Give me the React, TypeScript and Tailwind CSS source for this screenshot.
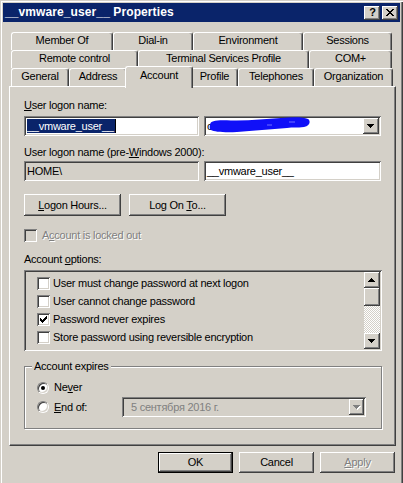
import React from "react";

// classic 3D edges
const RAISED = "shadow-[inset_-1px_-1px_#404040,inset_1px_1px_#ffffff,inset_-2px_-2px_#808080]";
const SUNKEN = "shadow-[inset_1px_1px_#808080,inset_-1px_-1px_#ffffff,inset_2px_2px_#404040,inset_-2px_-2px_#d4d0c8]";
const EMBOSS = "text-[#808080] [text-shadow:1px_1px_0_#ffffff]";

const ROW1 = [
  { label: "Member Of", w: "w-[102px]" },
  { label: "Dial-in", w: "w-[80px]" },
  { label: "Environment", w: "w-[110px]" },
  { label: "Sessions", w: "w-[89px]" },
];
const ROW2 = [
  { label: "Remote control", w: "w-[127px]" },
  { label: "Terminal Services Profile", w: "w-[171px]" },
  { label: "COM+", w: "w-[83px]" },
];
const ROW3 = [
  { label: "General", w: "w-[58px]" },
  { label: "Address", w: "w-[58px]" },
  { label: "Account", w: "w-[68px]", active: true },
  { label: "Profile", w: "w-[47px]" },
  { label: "Telephones", w: "w-[76px]" },
  { label: "Organization", w: "w-[79px]" },
];

const OPTIONS = [
  { label: "User must change password at next logon", checked: false },
  { label: "User cannot change password", checked: false },
  { label: "Password never expires", checked: true },
  { label: "Store password using reversible encryption", checked: false },
];

function Arrow({ up = false, disabled = false }: { up?: boolean; disabled?: boolean }) {
  const rows = up ? [3, 2, 1, 0] : [0, 1, 2, 3];
  const tri = (fill: string, dx: number) =>
    rows.map((inset, i) => <rect key={fill + i} x={inset + dx} y={i + dx} width={7 - inset * 2} height={1} fill={fill} />);
  return (
    <svg width="8" height="5" viewBox="0 0 8 5" shapeRendering="crispEdges">
      {disabled && tri("#ffffff", 1)}
      {tri(disabled ? "#808080" : "#000000", 0)}
    </svg>
  );
}

function CheckBox({ checked = false, disabled = false }: { checked?: boolean; disabled?: boolean }) {
  return (
    <span className={`w-[13px] h-[13px] shrink-0 flex items-center justify-center ${disabled ? "bg-[#d4d0c8]" : "bg-white"} ${SUNKEN}`}>
      {checked && (
        <svg width="7" height="7" viewBox="0 0 7 7" shapeRendering="crispEdges">
          <rect x="6" y="0" width="1" height="3" />
          <rect x="5" y="1" width="1" height="3" />
          <rect x="4" y="2" width="1" height="3" />
          <rect x="3" y="3" width="1" height="3" />
          <rect x="2" y="4" width="1" height="3" />
          <rect x="1" y="3" width="1" height="3" />
          <rect x="0" y="2" width="1" height="3" />
        </svg>
      )}
    </span>
  );
}

function Radio({ checked = false }: { checked?: boolean }) {
  return (
    <span className="w-[12px] h-[12px] shrink-0 rounded-full border border-t-[#808080] border-l-[#808080] border-b-white border-r-white">
      <span className="w-full h-full rounded-full bg-white flex items-center justify-center shadow-[inset_1px_1px_#404040,inset_-1px_-1px_#d4d0c8]">
        {checked && <span className="w-[4px] h-[4px] rounded-full bg-black" />}
      </span>
    </span>
  );
}

function Tab({ label, w, active }: { label: string; w: string; active?: boolean }) {
  return (
    <div
      className={`${w} flex justify-center pt-[1px] bg-[#d4d0c8] border-l border-t border-white border-r border-r-[#404040] rounded-t-[3px] shadow-[inset_-1px_0_#808080] ${
        active ? "relative z-10 h-[22px] -mx-[2px] -mb-[2px] pt-[2px]" : "h-[18px]"
      }`}
    >
      {label}
    </div>
  );
}

function PushButton({ children, w = "w-[75px]", h = "h-[21px]", isDefault = false }: { children: React.ReactNode; w?: string; h?: string; isDefault?: boolean }) {
  return (
    <div className={`${w} ${h} ${isDefault ? "border border-black" : ""} flex`}>
      <div className={`flex-1 flex items-center justify-center ${RAISED}`}>{children}</div>
    </div>
  );
}

export default function App() {
  return (
    <div className="w-[403px] h-[483px] overflow-hidden bg-[#d4d0c8] font-['Liberation_Sans',Arial,sans-serif] text-[11px] leading-[13px] tracking-[-0.25px] text-black select-none">
      <div className="w-[403px] h-[520px] pt-[3px] px-[3px] shadow-[inset_1px_1px_#d4d0c8,inset_2px_2px_#ffffff,inset_-1px_-1px_#404040,inset_-2px_-2px_#808080]">
        {/* caption */}
        <div className="h-[19px] bg-[#0a246a] flex items-center justify-between pl-[2px] pr-[2px]">
          <span className="text-white font-bold text-[12px] tracking-[0.1px]">__vmware_user__ Properties</span>
          <div className="flex gap-[2px] text-black">
            <div className={`w-[16px] h-[14px] bg-[#d4d0c8] flex items-center justify-center font-bold text-[11px] leading-none pl-[1px] ${RAISED}`}>?</div>
            <div className={`w-[16px] h-[14px] bg-[#d4d0c8] flex items-center justify-center ${RAISED}`}>
              <svg width="8" height="7" viewBox="0 0 8 7" shapeRendering="crispEdges">
                {[0, 1, 2, 3, 4, 5, 6].map((i) => (
                  <g key={i}>
                    <rect x={i} y={i} width="2" height="1" />
                    <rect x={6 - i} y={i} width="2" height="1" />
                  </g>
                ))}
              </svg>
            </div>
          </div>
        </div>

        <div className="pl-[6px] pr-[4px] pt-[10px]">
          {/* tab strip */}
          <div className="ml-[2px] w-[382px]">
            <div className="flex h-[18px]">
              {ROW1.map((t) => <Tab key={t.label} {...t} />)}
            </div>
            <div className="flex h-[18px]">
              {ROW2.map((t) => <Tab key={t.label} {...t} />)}
            </div>
            <div className="flex items-end h-[18px]">
              {ROW3.map((t) => <Tab key={t.label} {...t} />)}
            </div>
          </div>

          {/* Account page */}
          <div className="h-[360px] border-t border-l border-white border-r border-b border-r-[#404040] border-b-[#404040] shadow-[inset_-1px_-1px_#808080] pl-[14px] pr-[13px]">
            <div className="mt-[12px]">
              <u>U</u>ser logon name:
            </div>
            <div className="mt-[4px] flex gap-[5px]">
              <div className={`w-[175px] h-[20px] bg-white flex items-center pl-[3px] ${SUNKEN}`}>
                <span className="bg-[#0a246a] text-white h-[14px] flex items-center pr-[1px]">__vmware_user__</span>
                <span className="w-[1px] h-[14px] bg-black" />
              </div>
              <div className={`relative w-[177px] h-[20px] bg-white flex items-center justify-between pl-[3px] pr-[2px] ${SUNKEN}`}>
                <span>c</span>
                <svg className="absolute left-[5px] top-[1px]" width="102" height="16" viewBox="0 0 102 16">
                  <path
                    d="M1 8 C1 3 10 3 22 3.5 C40 4 56 2 72 1 C82 0 94 -0.5 99 2 C102 4 101 9 95 10 C88 11 84 10 78 11 C62 12 44 14 28 15 C16 15.5 5 15 2 13 C0.5 12 0.5 10 1 8 Z"
                    fill="#1010f8"
                  />
                  <path d="M58 8 L63 8 M80 5 L86 5" stroke="#7070ff" strokeWidth="1" />
                </svg>
                <div className={`w-[16px] h-[16px] flex items-center justify-center bg-[#d4d0c8] ${RAISED}`}>
                  <Arrow />
                </div>
              </div>
            </div>

            <div className="mt-[10px]">
              User logon name (pre-<u>W</u>indows 2000):
            </div>
            <div className="mt-[2px] flex gap-[5px]">
              <div className={`w-[175px] h-[20px] bg-[#d4d0c8] flex items-center pl-[3px] ${SUNKEN}`}>HOME\</div>
              <div className={`w-[177px] h-[20px] bg-white flex items-center pl-[3px] ${SUNKEN}`}>__vmware_user__</div>
            </div>

            <div className="mt-[13px] flex gap-[8px]">
              <PushButton w="w-[97px]" h="h-[22px]">
                <span>
                  <u>L</u>ogon Hours...
                </span>
              </PushButton>
              <PushButton w="w-[97px]" h="h-[22px]">
                <span>
                  Log On <u>T</u>o...
                </span>
              </PushButton>
            </div>

            <div className="mt-[13px] flex items-center gap-[5px] h-[13px]">
              <CheckBox disabled />
              <span className={EMBOSS}>
                A<u>c</u>count is locked out
              </span>
            </div>

            <div className="mt-[11px]">
              Account <u>o</u>ptions:
            </div>
            <div className={`mt-[4px] h-[81px] p-[2px] flex ${SUNKEN}`}>
              <div className="flex-1 pt-[2px] pl-[11px]">
                {OPTIONS.map((o) => (
                  <div key={o.label} className="h-[18px] flex items-center gap-[3px]">
                    <CheckBox checked={o.checked} />
                    <span>{o.label}</span>
                  </div>
                ))}
              </div>
              <div className="w-[16px] flex flex-col">
                <div className={`h-[16px] flex items-center justify-center ${RAISED}`}>
                  <Arrow up />
                </div>
                <div className={`h-[18px] ${RAISED}`} />
                <div className="flex-1 bg-[repeating-conic-gradient(#ffffff_0_25%,#d4d0c8_0_50%)] bg-[length:2px_2px]" />
                <div className={`h-[16px] flex items-center justify-center ${RAISED}`}>
                  <Arrow />
                </div>
              </div>
            </div>

            {/* Account expires group */}
            <div className="relative mt-[15px] h-[63px] border border-[#808080] shadow-[inset_1px_1px_#ffffff,1px_1px_#ffffff] pl-[12px]">
              <span className="absolute left-[7px] -top-[7px] px-[2px] bg-[#d4d0c8]">Account expires</span>
              <div className="mt-[14px] h-[13px] flex items-center gap-[5px]">
                <Radio checked />
                <span>
                  Ne<u>v</u>er
                </span>
              </div>
              <div className="mt-[3px] h-[20px] flex items-center">
                <Radio />
                <span className="ml-[5px] w-[68px]">
                  <u>E</u>nd of:
                </span>
                <div className={`w-[244px] h-[20px] flex items-center justify-between pl-[9px] pr-[2px] text-[#808080] ${SUNKEN}`}>
                  <span>5 сентября 2016 г.</span>
                  <div className={`w-[15px] h-[16px] flex items-center justify-center ${RAISED}`}>
                    <Arrow disabled />
                  </div>
                </div>
              </div>
            </div>
          </div>

          {/* dialog buttons */}
          <div className="mt-[6px] pr-[1px] flex justify-end gap-[6px]">
            <PushButton isDefault>OK</PushButton>
            <PushButton>Cancel</PushButton>
            <PushButton>
              <span className={EMBOSS}>
                <u>A</u>pply
              </span>
            </PushButton>
          </div>
        </div>
      </div>
    </div>
  );
}
